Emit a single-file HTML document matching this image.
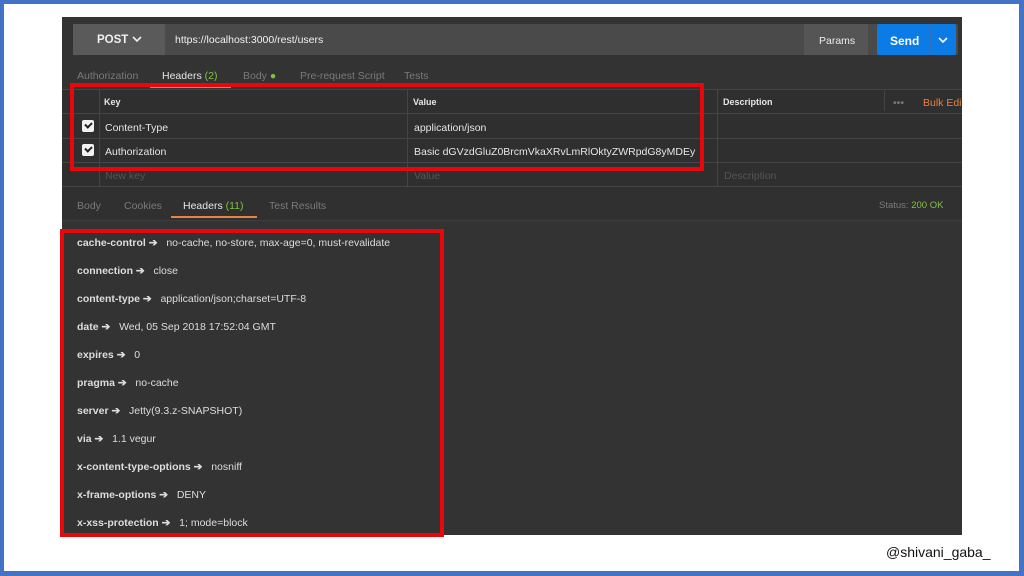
<!DOCTYPE html>
<html><head><meta charset="utf-8"><style>
*{margin:0;padding:0;box-sizing:border-box}
body{width:1024px;height:576px;background:#4472c4;position:relative;overflow:hidden;font-family:"Liberation Sans",sans-serif}
.slide{position:absolute;left:4px;top:4px;width:1015px;height:567px;background:#fff}
.a{position:absolute}
.panel{left:62px;top:17px;width:900px;height:518px;background:#333}
.t{position:absolute;font-size:10.5px;color:#e6e6e6;white-space:nowrap;margin-top:1px}
.g{color:#7a7a7a}
.b{font-weight:bold}
.red{position:absolute;border:4px solid #e8070b}
.cb{position:absolute;width:12px;height:12px;background:#f2f2f2;border-radius:2px}
.cb:after{content:"";position:absolute;left:3px;top:2px;width:5px;height:3px;border-left:2px solid #222;border-bottom:2px solid #222;transform:rotate(-45deg)}
.hl{position:absolute;height:1px;background:#454545}
.vl{position:absolute;width:1px;background:#454545}
</style></head><body>
<div class="slide"></div>
<div class="a panel"></div>
<!-- URL bar -->
<div class="a" style="left:73px;top:24px;width:885px;height:31px;background:#4a4a4a;border-radius:2px"></div>
<div class="a" style="left:73px;top:24px;width:92px;height:31px;background:#5a5a5a"></div>
<div class="t b" style="left:97px;top:33px;font-size:11.5px;color:#f0f0f0">POST</div>
<svg class="a" style="left:132px;top:36px" width="10" height="7"><path d="M1 1L5 5L9 1" stroke="#eee" stroke-width="1.6" fill="none"/></svg>
<div class="t" style="left:175px;top:33px;color:#f0f0f0">https://localhost:3000/rest/users</div>
<div class="a" style="left:804px;top:24px;width:64px;height:31px;background:#555"></div>
<div class="t" style="left:819px;top:34px;color:#eee">Params</div>
<div class="a" style="left:877px;top:24px;width:79px;height:31px;background:#0b7be6;border-radius:2px"></div>
<div class="a" style="left:930px;top:24px;width:1px;height:31px;background:#2a6fc0"></div>
<div class="t b" style="left:890px;top:33px;font-size:12px;color:#fff">Send</div>
<svg class="a" style="left:938px;top:37px" width="10" height="7"><path d="M1 1L5 5L9 1" stroke="#fff" stroke-width="1.6" fill="none"/></svg>
<!-- req tabs -->
<div class="t g" style="left:77px;top:69px">Authorization</div>
<div class="t" style="left:162px;top:69px">Headers <span style="color:#7ec33f">(2)</span></div>
<div class="a" style="left:150px;top:86px;width:81px;height:2px;background:#e8823d"></div>
<div class="t g" style="left:243px;top:69px">Body <span style="color:#7ec33f">●</span></div>
<div class="t g" style="left:300px;top:69px">Pre-request Script</div>
<div class="t g" style="left:404px;top:69px">Tests</div>
<!-- table -->
<div class="a" style="left:62px;top:89px;width:900px;height:98px;background:#2f2f2f"></div>
<div class="hl" style="left:62px;top:89px;width:900px"></div>
<div class="hl" style="left:62px;top:113px;width:900px"></div>
<div class="hl" style="left:62px;top:138px;width:900px"></div>
<div class="hl" style="left:62px;top:162px;width:900px"></div>
<div class="hl" style="left:62px;top:186px;width:900px"></div>
<div class="vl" style="left:99px;top:89px;height:98px"></div>
<div class="vl" style="left:407px;top:89px;height:98px"></div>
<div class="vl" style="left:717px;top:89px;height:98px"></div>
<div class="vl" style="left:884px;top:91px;height:20px"></div>
<div class="t b" style="left:104px;top:96px;font-size:9px">Key</div>
<div class="t b" style="left:413px;top:96px;font-size:9px">Value</div>
<div class="t b" style="left:723px;top:96px;font-size:9px">Description</div>
<div class="t g" style="left:893px;top:96px">•••</div>
<div class="t" style="left:923px;top:96px;color:#e8823d;width:39px;overflow:hidden">Bulk Edit</div>
<div class="cb" style="left:82px;top:120px"></div>
<div class="cb" style="left:82px;top:144px"></div>
<div class="t" style="left:105px;top:121px">Content-Type</div>
<div class="t" style="left:414px;top:121px">application/json</div>
<div class="t" style="left:105px;top:145px">Authorization</div>
<div class="t" style="left:414px;top:145px">Basic dGVzdGluZ0BrcmVkaXRvLmRlOktyZWRpdG8yMDEy</div>
<div class="t" style="left:105px;top:169px;color:#555">New key</div>
<div class="t" style="left:414px;top:169px;color:#555">Value</div>
<div class="t" style="left:724px;top:169px;color:#555">Description</div>
<div class="red" style="left:70px;top:83px;width:634px;height:88px"></div>
<!-- response tabs -->
<div class="a" style="left:62px;top:187px;width:900px;height:34px;background:#303030"></div>
<div class="hl" style="left:62px;top:220px;width:900px;background:#3c3c3c"></div>
<div class="t g" style="left:77px;top:199px">Body</div>
<div class="t g" style="left:124px;top:199px">Cookies</div>
<div class="t" style="left:183px;top:199px">Headers <span style="color:#7ec33f">(11)</span></div>
<div class="a" style="left:171px;top:216px;width:86px;height:2px;background:#e8823d"></div>
<div class="t g" style="left:269px;top:199px">Test Results</div>
<div class="t g" style="left:879px;top:199px;font-size:9.5px">Status: <span style="color:#7ec33f">200 OK</span></div>
<!-- headers list -->
<div class="t" style="left:77px;top:236px;color:#ddd"><b>cache-control ➔</b>&nbsp;&nbsp; no-cache, no-store, max-age=0, must-revalidate</div>
<div class="t" style="left:77px;top:264px;color:#ddd"><b>connection ➔</b>&nbsp;&nbsp; close</div>
<div class="t" style="left:77px;top:292px;color:#ddd"><b>content-type ➔</b>&nbsp;&nbsp; application/json;charset=UTF-8</div>
<div class="t" style="left:77px;top:320px;color:#ddd"><b>date ➔</b>&nbsp;&nbsp; Wed, 05 Sep 2018 17:52:04 GMT</div>
<div class="t" style="left:77px;top:348px;color:#ddd"><b>expires ➔</b>&nbsp;&nbsp; 0</div>
<div class="t" style="left:77px;top:376px;color:#ddd"><b>pragma ➔</b>&nbsp;&nbsp; no-cache</div>
<div class="t" style="left:77px;top:404px;color:#ddd"><b>server ➔</b>&nbsp;&nbsp; Jetty(9.3.z-SNAPSHOT)</div>
<div class="t" style="left:77px;top:432px;color:#ddd"><b>via ➔</b>&nbsp;&nbsp; 1.1 vegur</div>
<div class="t" style="left:77px;top:460px;color:#ddd"><b>x-content-type-options ➔</b>&nbsp;&nbsp; nosniff</div>
<div class="t" style="left:77px;top:488px;color:#ddd"><b>x-frame-options ➔</b>&nbsp;&nbsp; DENY</div>
<div class="t" style="left:77px;top:516px;color:#ddd"><b>x-xss-protection ➔</b>&nbsp;&nbsp; 1; mode=block</div>
<div class="red" style="left:60px;top:229px;width:384px;height:308px"></div>
<div class="t" style="left:886px;top:543px;font-size:14px;color:#111">@shivani_gaba_</div>
</body></html>
